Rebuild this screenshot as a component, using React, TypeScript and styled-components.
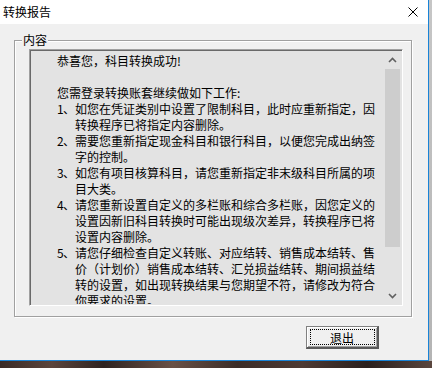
import styled, { createGlobalStyle } from 'styled-components';

const GlobalStyle = createGlobalStyle`
  html, body {
    margin: 0;
    padding: 0;
  }
  body {
    font-family: 'Noto Sans CJK SC', 'Liberation Sans', sans-serif;
    font-size: 12px;
  }
`;

const Desktop = styled.div`
  width: 432px;
  height: 368px;
  overflow: hidden;
  background:
    linear-gradient(#c6c6c6, #b4b4b4) top left / 100% 361px no-repeat,
    linear-gradient(90deg, #3a2a25 0%, #5c453c 12%, #2f2320 24%, #6a5146 40%, #3b2c27 55%, #4e3a33 70%, #2a1f1c 85%, #5a463e 100%);
`;

const Window = styled.div`
  width: 429px;
  height: 361px;
  box-sizing: border-box;
  display: flex;
  flex-direction: column;
  background: #f0f0f0;
  border-right: 1px solid #1883d7;
  border-bottom: 1px solid #1883d7;
`;

const TitleBar = styled.div`
  height: 24px;
  flex: none;
  display: flex;
  align-items: center;
  justify-content: space-between;
  padding: 0 10px 0 3px;
  background: #fff;
  color: #000;
  font-size: 12px;
  line-height: 24px;
`;

const CloseIcon = styled.svg`
  display: block;
  width: 10px;
  height: 10px;
  margin-top: -1px;
`;

const Client = styled.div`
  flex: 1;
  display: flex;
  flex-direction: column;
`;

const Group = styled.div`
  position: relative;
  width: 398px;
  box-sizing: border-box;
  margin: 16px 0 0 14px;
  padding: 8px 8px 10px 14px;
  border: 1px solid #a0a0a0;
  box-shadow: inset 1px 1px 0 #fff, 1px 1px 0 #fff;
`;

const Caption = styled.span`
  position: absolute;
  top: -8px;
  left: 7px;
  padding: 0 1px;
  background: #f0f0f0;
  font-size: 12px;
  line-height: 14px;
  color: #000;
`;

const Edit = styled.div`
  width: 374px;
  height: 257px;
  box-sizing: border-box;
  display: flex;
  border-style: solid;
  border-width: 1px;
  border-color: #a0a0a0 #fff #fff #a0a0a0;
  box-shadow: inset 1px 1px 0 #696969, inset -1px -1px 0 #e3e3e3;
  background: #e3e3e3;
  padding: 1px;
`;

const TextPane = styled.div`
  flex: 1;
  overflow: hidden;
  padding: 2px 0 0 26px;
  color: #000;
`;

const Item = styled.div`
  display: flex;
`;

const Marker = styled.div`
  width: 18px;
  flex: none;
  height: 16px;
  line-height: 16px;
  white-space: nowrap;
`;

const Digit = styled.span`
  display: inline-block;
  width: 6px;
`;

const Lines = styled.div`
  display: flex;
  flex-direction: column;
`;

const Line = styled.div`
  height: 16px;
  line-height: 16px;
  white-space: nowrap;
`;

const ScrollBar = styled.div`
  width: 17px;
  flex: none;
  display: flex;
  flex-direction: column;
  align-items: center;
  background: #e3e3e3;
`;

const Arrow = styled.div`
  height: 17px;
  width: 17px;
  flex: none;
  display: flex;
  align-items: center;
  justify-content: center;
`;

const Track = styled.div`
  flex: 1;
  width: 100%;
  padding-top: 1px;
  box-sizing: border-box;
`;

const Thumb = styled.div<{ $size: number }>`
  height: ${(p) => p.$size}px;
  width: 15px;
  margin-left: 1px;
  background: #cdcdcd;
`;

const Footer = styled.div`
  display: flex;
  padding: 9px 0 0 306px;
`;

const Button = styled.button`
  width: 73px;
  height: 23px;
  box-sizing: border-box;
  position: relative;
  padding: 0;
  margin: 0;
  background: #f0f0f0;
  border-style: solid;
  border-width: 1px 2px 2px 1px;
  border-color: #808080 #5a5a5a #5a5a5a #808080;
  box-shadow: inset 1px 1px 0 #fff, inset -1px -1px 0 #a0a0a0;
  font-family: 'Noto Sans CJK SC', 'Liberation Sans', sans-serif;
  font-size: 12px;
  line-height: 19px;
  color: #000;

  &::after {
    content: '';
    position: absolute;
    inset: 2px 2px 2px 3px;
    border: 1px dotted #000;
  }
`;

type Para = { num?: string; lines: string[] };

const report: Para[] = [
  { lines: ['恭喜您，科目转换成功!'] },
  { lines: [''] },
  { lines: ['您需登录转换账套继续做如下工作:'] },
  { num: '1', lines: ['如您在凭证类别中设置了限制科目，此时应重新指定，因', '转换程序已将指定内容删除。'] },
  { num: '2', lines: ['需要您重新指定现金科目和银行科目，以便您完成出纳签', '字的控制。'] },
  { num: '3', lines: ['如您有项目核算科目，请您重新指定非末级科目所属的项', '目大类。'] },
  {
    num: '4',
    lines: ['请您重新设置自定义的多栏账和综合多栏账，因您定义的', '设置因新旧科目转换时可能出现级次差异，转换程序已将', '设置内容删除。'],
  },
  {
    num: '5',
    lines: [
      '请您仔细检查自定义转账、对应结转、销售成本结转、售',
      '价（计划价）销售成本结转、汇兑损益结转、期间损益结',
      '转的设置，如出现转换结果与您期望不符，请修改为符合',
      '你要求的设置。',
    ],
  },
];

const Chevron = ({ up }: { up?: boolean }) => (
  <svg width="9" height="6" viewBox="0 0 9 6">
    <path
      d={up ? 'M1 5 L4.5 1.5 L8 5' : 'M1 1 L4.5 4.5 L8 1'}
      fill="none"
      stroke="#606060"
      strokeWidth="1.6"
    />
  </svg>
);

const App = () => {
  return (
    <Desktop>
      <GlobalStyle />
      <Window>
        <TitleBar>
          <span>转换报告</span>
          <CloseIcon viewBox="0 0 10 10">
            <path d="M0.5 0.5 L9.5 9.5 M9.5 0.5 L0.5 9.5" stroke="#000" strokeWidth="1" />
          </CloseIcon>
        </TitleBar>
        <Client>
          <Group>
            <Caption>内容</Caption>
            <Edit>
              <TextPane>
                {report.map((p, i) => (
                  <Item key={i}>
                    {p.num && (
                      <Marker>
                        <Digit>{p.num}</Digit>、
                      </Marker>
                    )}
                    <Lines>
                      {p.lines.map((l, j) => (
                        <Line key={j}>{l}</Line>
                      ))}
                    </Lines>
                  </Item>
                ))}
              </TextPane>
              <ScrollBar>
                <Arrow>
                  <Chevron up />
                </Arrow>
                <Track>
                  <Thumb $size={178} />
                </Track>
                <Arrow>
                  <Chevron />
                </Arrow>
              </ScrollBar>
            </Edit>
          </Group>
          <Footer>
            <Button>退出</Button>
          </Footer>
        </Client>
      </Window>
    </Desktop>
  );
};

export default App;
